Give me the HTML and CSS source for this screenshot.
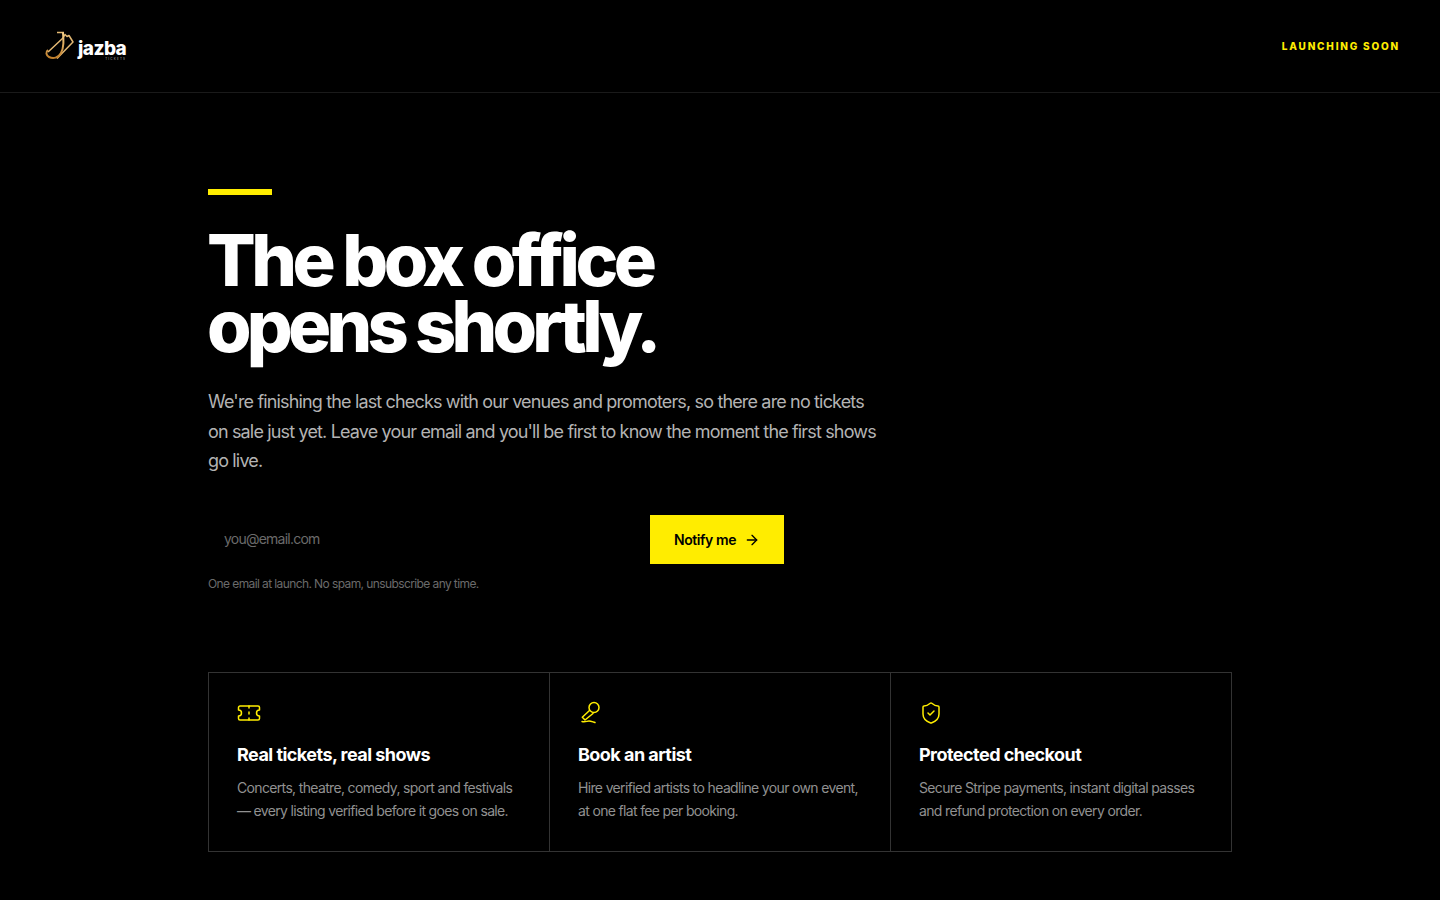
FILE: index.html
```html
<!DOCTYPE html>
<html lang="en">
<head>
  <meta charset="UTF-8">
  <title>Jazba Tickets</title>
  <link rel="stylesheet" href="styles.css">
</head>
<body>
  <header class="topbar">
    <div class="logo">
      <svg class="logo-mark" width="32" height="30" viewBox="0 0 32 30" fill="none" stroke-linejoin="round">
        <defs>
          <linearGradient id="gold" x1="0" y1="0" x2="0" y2="1">
            <stop offset="0" stop-color="#f6d08a"/>
            <stop offset="1" stop-color="#c07f2c"/>
          </linearGradient>
        </defs>
        <path d="M4 21 19 7l2-3.500 2 2 2-1 4 6.500-16 16.500" stroke="#e3b873" stroke-width="1.500"/>
        <path d="M13 1.500h7" stroke="#e3b873" stroke-width="1.500"/>
        <path d="M19 1.500c.6 8.500 1 14.500-2 20.500-2.500 5-8 6-12 4-3-1.500-3.500-5-1-7" stroke="url(#gold)" stroke-width="2"/>
      </svg>
      <div class="logo-text">
        <span class="logo-name">jazba</span>
        <span class="logo-sub">TICKETS</span>
      </div>
    </div>
    <span class="status">LAUNCHING SOON</span>
  </header>

  <main class="content">
    <div class="accent"></div>
    <h1>The box office<br><span class="second-line">opens shortly.</span></h1>
    <p class="lead">We're finishing the last checks with our venues and promoters, so there are no tickets on sale just yet. Leave your email and you'll be first to know the moment the first shows go live.</p>

    <form class="signup">
      <input class="email" type="email" placeholder="you@email.com">
      <button class="notify" type="button">
        Notify me
        <svg class="arrow" width="16" height="16" viewBox="0 0 24 24" fill="none" stroke="currentColor" stroke-width="2" stroke-linecap="round" stroke-linejoin="round"><path d="M5 12h14"/><path d="m12 5 7 7-7 7"/></svg>
      </button>
    </form>
    <p class="note">One email at launch. No spam, unsubscribe any time.</p>

    <section class="features">
      <div class="feature">
        <svg class="icon" width="24" height="24" viewBox="0 0 24 24" fill="none" stroke="currentColor" stroke-width="1.500" stroke-linecap="round" stroke-linejoin="round"><path d="M3 5h18a1.500 1.500 0 0 1 1.500 1.500V9a3 3 0 0 0 0 6v2.500A1.500 1.500 0 0 1 21 19H3a1.500 1.500 0 0 1-1.500-1.500V15a3 3 0 0 0 0-6V6.500A1.500 1.500 0 0 1 3 5z"/><path d="M12 5v2M12 11v2M12 17v2"/></svg>
        <h3>Real tickets, real shows</h3>
        <p>Concerts, theatre, comedy, sport and festivals — every listing verified before it goes on sale.</p>
      </div>
      <div class="feature">
        <svg class="icon" width="24" height="24" viewBox="0 0 24 24" fill="none" stroke="currentColor" stroke-width="1.500" stroke-linecap="round" stroke-linejoin="round"><circle cx="16" cy="6.500" r="5"/><path d="M11.500 9.500 4.300 16.300 7 19l8-6.500"/><path d="M4 20.500c3 1 5-.5 7-.5s4 1 6 1.500"/></svg>
        <h3>Book an artist</h3>
        <p>Hire verified artists to headline your own event, at one flat fee per booking.</p>
      </div>
      <div class="feature">
        <svg class="icon" width="24" height="24" viewBox="0 0 24 24" fill="none" stroke="currentColor" stroke-width="1.500" stroke-linecap="round" stroke-linejoin="round"><path d="M20 13c0 5-3.500 7.500-7.660 8.950a1 1 0 0 1-.67-.01C7.500 20.500 4 18 4 13V6a1 1 0 0 1 1-1c2 0 4.500-1.200 6.240-2.720a1.170 1.170 0 0 1 1.520 0C14.510 3.810 17 5 19 5a1 1 0 0 1 1 1z"/><path d="m9 12 2 2 4-4"/></svg>
        <h3>Protected checkout</h3>
        <p>Secure Stripe payments, instant digital passes and refund protection on every order.</p>
      </div>
    </section>
  </main>
</body>
</html>
```

FILE: styles.css
```css
* {
  box-sizing: border-box;
}

body {
  margin: 0;
  background-color: #000;
  color: #fff;
  font-family: Inter, "Liberation Sans", sans-serif;
}

.topbar {
  display: flex;
  justify-content: space-between;
  align-items: center;
  height: 93px;
  padding: 0 40px 0 44px;
  border-bottom: 1px solid #1a1a1a;
}

.logo {
  display: flex;
  align-items: center;
  gap: 2px;
}

.logo-text {
  display: flex;
  flex-direction: column;
  align-items: flex-end;
  margin-top: 9px;
}

.logo-name {
  font-size: 19px;
  font-weight: 800;
  line-height: 16px;
  letter-spacing: -0.03em;
}

.logo-sub {
  font-size: 3px;
  line-height: 4px;
  letter-spacing: 0.4em;
  color: #aaa;
}

.status {
  color: #ffed00;
  font-size: 10px;
  font-weight: 800;
  letter-spacing: 0.18em;
}

.content {
  width: 1024px;
  margin: 0 auto;
  padding-top: 96px;
}

.accent {
  width: 64px;
  height: 6px;
  background-color: #ffed00;
}

h1 {
  margin: 32px 0 0 -1px;
  font-size: 72px;
  font-weight: 800;
  line-height: 66px;
  letter-spacing: -0.063em;
}

.second-line {
  letter-spacing: -0.066em;
}

.lead {
  width: 672px;
  margin: 28px 0 0;
  font-size: 18px;
  line-height: 29.500px;
  letter-spacing: -0.047em;
  color: #b3b3b3;
}

.signup {
  display: flex;
  width: 576px;
  margin-top: 39px;
}

.email {
  flex: 1;
  min-width: 0;
  height: 49px;
  padding: 0 16px 2px;
  background: transparent;
  border: 0;
  outline: 0;
  color: #fff;
  font-family: inherit;
  font-size: 14px;
  letter-spacing: -0.055em;
}

.email::placeholder {
  color: #6b6b6b;
}

.notify {
  display: flex;
  align-items: center;
  gap: 8px;
  height: 49px;
  padding: 0 24px;
  background-color: #ffed00;
  border: 0;
  color: #000;
  font-family: inherit;
  font-size: 14px;
  font-weight: 600;
  letter-spacing: -0.03em;
}

.arrow {
  margin-top: 1px;
}

.note {
  margin: 12px 0 0;
  font-size: 12px;
  line-height: 16px;
  letter-spacing: -0.05em;
  color: #6b6b6b;
}

.features {
  display: grid;
  grid-template-columns: repeat(3, 1fr);
  gap: 1px;
  margin-top: 80px;
  border: 1px solid #333;
  background-color: #333;
}

.feature {
  height: 178px;
  padding: 28px;
  background-color: #000;
}

.icon {
  display: block;
  color: #ffed00;
}

.feature h3 {
  margin: 16px 0 0;
  font-size: 18px;
  font-weight: 700;
  line-height: 28px;
  letter-spacing: -0.03em;
}

.feature p {
  margin: 7px 0 0;
  font-size: 14px;
  line-height: 23px;
  letter-spacing: -0.047em;
  color: #919191;
}
```
